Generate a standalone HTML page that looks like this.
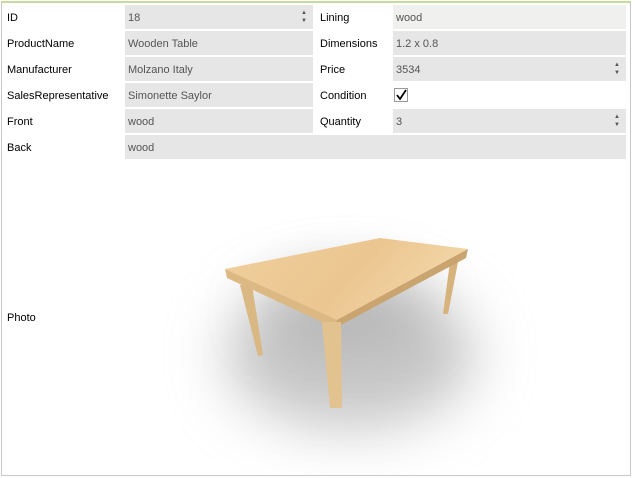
<!DOCTYPE html>
<html><head><style>
body{margin:0;width:635px;height:478px;background:#fff;font-family:"Segoe UI","Liberation Sans",sans-serif;font-size:11px;color:#000;position:relative;overflow:hidden}
.frame{position:absolute;left:1px;top:1px;width:628px;height:472px;border:1px solid #c8c8c8;border-top:2px solid #c5dc9a}
.l{position:absolute;height:24px;line-height:26px}
.i{position:absolute;height:24px;line-height:26px;background:#e6e6e6;color:#555;padding-left:3px;box-sizing:border-box}
.sp{position:absolute;right:6px;top:4px;font-size:6px;line-height:8px;color:#555}
</style></head><body>
<div class="frame"></div>
<div class="l" style="left:7px;top:5px">ID</div>
<div class="l" style="left:7px;top:31px">ProductName</div>
<div class="l" style="left:7px;top:57px">Manufacturer</div>
<div class="l" style="left:7px;top:83px">SalesRepresentative</div>
<div class="l" style="left:7px;top:109px">Front</div>
<div class="l" style="left:7px;top:135px">Back</div>
<div class="l" style="left:7px;top:305px">Photo</div>
<div class="i" style="left:125px;top:5px;width:188px">18<div class="sp">▲<br>▼</div></div>
<div class="i" style="left:125px;top:31px;width:188px">Wooden Table</div>
<div class="i" style="left:125px;top:57px;width:188px">Molzano Italy</div>
<div class="i" style="left:125px;top:83px;width:188px">Simonette Saylor</div>
<div class="i" style="left:125px;top:109px;width:188px">wood</div>
<div class="i" style="left:125px;top:135px;width:501px">wood</div>
<div class="l" style="left:320px;top:5px">Lining</div>
<div class="l" style="left:320px;top:31px">Dimensions</div>
<div class="l" style="left:320px;top:57px">Price</div>
<div class="l" style="left:320px;top:83px">Condition</div>
<div class="l" style="left:320px;top:109px">Quantity</div>
<div class="i" style="left:393px;top:5px;width:233px;background:#f0f0ee">wood</div>
<div class="i" style="left:393px;top:31px;width:233px">1.2 x 0.8</div>
<div class="i" style="left:393px;top:57px;width:233px">3534<div class="sp">▲<br>▼</div></div>
<div style="position:absolute;left:394px;top:88px;width:14px;height:14px;border:1px solid #999;box-sizing:border-box;background:#fff"><svg width="12" height="12" viewBox="0 0 12 12" style="position:absolute;left:0;top:0"><path d="M2 6 L5 10 L11 1" stroke="#000" stroke-width="1.8" fill="none"/></svg></div>
<div class="i" style="left:393px;top:109px;width:233px">3<div class="sp">▲<br>▼</div></div>
<svg width="635" height="478" style="position:absolute;left:0;top:0">
<defs>
<filter id="b" filterUnits="userSpaceOnUse" x="0" y="160" width="635" height="318"><feGaussianBlur stdDeviation="28"/></filter>
<linearGradient id="top" x1="0" y1="0" x2="1" y2="0.3"><stop offset="0" stop-color="#f0cf9c"/><stop offset="0.6" stop-color="#ebc690"/><stop offset="1" stop-color="#f3d6a8"/></linearGradient>
</defs>
<ellipse cx="350" cy="355" rx="125" ry="75" fill="#c8c8c8" filter="url(#b)"/>
<ellipse cx="345" cy="310" rx="85" ry="35" fill="#a0a0a0" filter="url(#b)" opacity="0.5"/>
<polygon points="240,285 252,285 263,355 258,356" fill="#d9b884"/>
<polygon points="450,262 458,262 448,314 443,314" fill="#d6b27c"/>
<polygon points="225,269 380,238 468,249 337,320" fill="url(#top)"/>
<polygon points="225,269 337,320 335,328 227,278" fill="#dcb982"/>
<polygon points="337,320 468,249 466,258 335,328" fill="#c9a46e"/>
<polygon points="322,322 341,322 342,408 330,408" fill="#e2c390"/>
</svg>
</body></html>
